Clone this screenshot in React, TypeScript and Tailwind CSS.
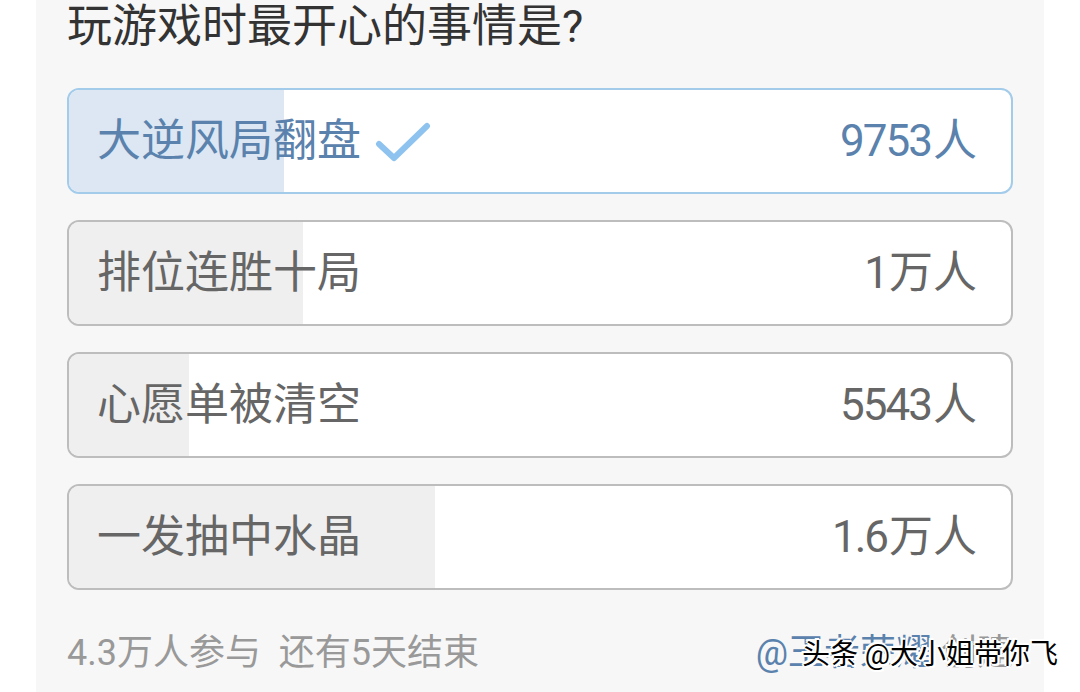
import React from 'react'

const options = [
  { label: '大逆风局翻盘', num: '9753', unit: '人', fill: 'w-[215px]', selected: true },
  { label: '排位连胜十局', num: '1', unit: '万人', fill: 'w-[234px]', selected: false },
  { label: '心愿单被清空', num: '5543', unit: '人', fill: 'w-[120px]', selected: false },
  { label: '一发抽中水晶', num: '1.6', unit: '万人', fill: 'w-[366px]', selected: false },
]

const Check = () => (
  <svg width="56" height="44" viewBox="0 0 56 44" className="ml-[14px] mt-[2px]">
    <path d="M4 24 L19 38 L52 6" fill="none" stroke="#8fc3ef" strokeWidth="6" strokeLinecap="round" strokeLinejoin="round" />
  </svg>
)

export default function App() {
  return (
    <div
      className="relative h-[692px] w-[1080px] overflow-hidden bg-white"
      style={{ fontFamily: 'Roboto, "Noto Sans CJK SC", sans-serif' }}
    >
      <div className="ml-[36px] h-full w-[1008px] bg-[#f7f7f7] px-[31px] pt-[4px]">
        {/* Question */}
        <div className="text-[45px] leading-[46px] text-[#333]">玩游戏时最开心的事情是?</div>

        {/* Options */}
        <div className="mt-[38px] flex flex-col gap-[26px]">
          {options.map((o) => (
            <div
              key={o.label}
              className={`relative h-[106px] overflow-hidden rounded-[12px] border-2 bg-white ${
                o.selected ? 'border-[#a3cbea]' : 'border-[#bdbdbd]'
              }`}
            >
              <div className={`absolute inset-y-0 left-0 ${o.fill} ${o.selected ? 'bg-[#dce7f3]' : 'bg-[#efefef]'}`} />
              <div
                className={`relative flex h-full items-center justify-between pl-[28px] pr-[34px] text-[44px] ${
                  o.selected ? 'text-[#5a82ad]' : 'text-[#666]'
                }`}
              >
                <div className="flex items-center">
                  <span>{o.label}</span>
                  {o.selected && <Check />}
                </div>
                <span>
                  <span className="tracking-[-2px]">{o.num}</span>
                  <span className="ml-[2px]">{o.unit}</span>
                </span>
              </div>
            </div>
          ))}
        </div>

        {/* Footer */}
        <div className="mt-[43px] flex items-center justify-between text-[36px] leading-[40px] text-[#999]">
          <span>4.3万人参与&nbsp;&nbsp;还有5天结束</span>
          <span>
            <span className="text-[#5a82ad]">@王者荣耀</span> 创建
          </span>
        </div>
      </div>

      {/* Watermark */}
      <div
        className="absolute right-[22px] top-[638px] text-[28px] leading-[34px] text-black"
        style={{ textShadow: '-2px 0 #fff, 2px 0 #fff, 0 -2px #fff, 0 2px #fff, 2px 2px #fff, -2px -2px #fff' }}
      >
        头条 @大小姐带你飞
      </div>
    </div>
  )
}
